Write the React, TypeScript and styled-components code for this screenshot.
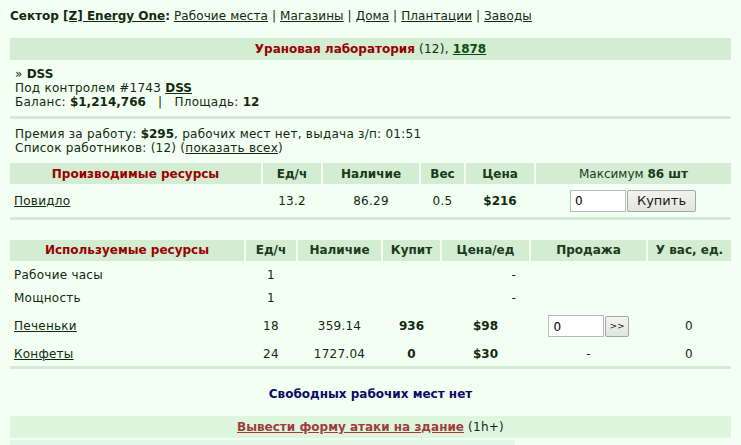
import { FC } from 'react'
import styled, { createGlobalStyle } from 'styled-components'

// ========================================================================
// Style
// ========================================================================

const PAGE = '#f2fff2'
const BAND = '#d2edd2'
const LINE = '#d3ebd3'
const TEXT = '#112a11'
const HEAD = '#1a3a1a'
const RED = '#990000'

const GlobalStyle = createGlobalStyle`
  body {
    margin: 0;
    padding: 9px 10px;
    background: ${PAGE};
    color: ${TEXT};
    font-family: "DejaVu Sans", Verdana, sans-serif;
    font-size: 12px;
    line-height: 14px;
    letter-spacing: 0.25px;
  }
  b, th {
    letter-spacing: 0;
  }
`

const Nav = styled.div`
  height: 14px;
  margin-bottom: 15px;
  letter-spacing: 0.1px;
`

const Link = styled.a<{ $bold?: boolean; $color?: string }>`
  color: ${(p) => p.$color || TEXT};
  text-decoration: underline;
  font-weight: ${(p) => (p.$bold ? 'bold' : 'normal')};
  letter-spacing: ${(p) => (p.$bold ? '0' : 'inherit')};
  cursor: pointer;
`

const Band = styled.div<{ $tone?: string }>`
  height: 22px;
  display: flex;
  align-items: center;
  justify-content: center;
  background: ${(p) => p.$tone || BAND};
`

const Red = styled.b`
  color: ${RED};
`

const Info = styled.div`
  padding: 7px 5px 7px;
  border-bottom: 3px solid ${LINE};
`

const Info2 = styled.div`
  padding: 8px 5px 8px;
`

const Table = styled.table<{ $gap?: number }>`
  width: 100%;
  table-layout: fixed;
  border-collapse: collapse;
  border-bottom: 3px solid ${LINE};
  margin-top: ${(p) => p.$gap || 0}px;
`

const Th = styled.th<{ $red?: boolean; $plain?: boolean }>`
  height: 21px;
  padding: 0;
  background: ${BAND};
  border-left: 2px solid ${PAGE};
  color: ${(p) => (p.$red ? RED : HEAD)};
  font-weight: ${(p) => (p.$plain ? 'normal' : 'bold')};
  text-align: center;

  &:first-child {
    border-left: none;
  }
`

const Row = styled.tr<{ $h: number; $pt: number }>`
  height: ${(p) => p.$h}px;

  & > td {
    padding-top: ${(p) => p.$pt}px;
  }
`

const Td = styled.td<{ $align?: string; $bold?: boolean; $pad?: number }>`
  padding: 0 ${(p) => p.$pad ?? 0}px 0 ${(p) => (p.$align === 'left' ? 4 : 0)}px;
  text-align: ${(p) => p.$align || 'center'};
  font-weight: ${(p) => (p.$bold ? 'bold' : 'normal')};
  letter-spacing: ${(p) => (p.$bold ? '0' : 'inherit')};
  vertical-align: middle;
`

const Form = styled.div`
  display: inline-flex;
  align-items: center;
  gap: 1px;
  vertical-align: middle;
`

const Input = styled.input<{ $w: number }>`
  box-sizing: border-box;
  width: ${(p) => p.$w}px;
  height: 22px;
  padding: 1px 4px 0;
  border: 1px solid #b5bdb5;
  background: #fff;
  color: #000;
  font-family: "DejaVu Sans", Verdana, sans-serif;
  font-size: 12px;
`

const Button = styled.button<{ $small?: boolean }>`
  box-sizing: border-box;
  height: ${(p) => (p.$small ? 21 : 22)}px;
  padding: ${(p) => (p.$small ? '0 3px' : '0 9px')};
  border: 1px solid #a3a8a3;
  border-radius: 2px;
  background: linear-gradient(#f2f3ef, #e2e5de);
  color: #1a1a1a;
  font-family: "DejaVu Sans", Tahoma, sans-serif;
  font-size: ${(p) => (p.$small ? 9 : 13)}px;
  line-height: 1;
`

const Notice = styled.div`
  margin-top: 18px;
  height: 14px;
  text-align: center;
  font-weight: bold;
  letter-spacing: 0;
  color: #0a0a66;
`

const Attack = styled(Band)`
  margin-top: 15px;
`

const Next = styled.div`
  width: 505px;
  height: 6px;
  margin-top: 2px;
  background: #e4f7e4;
`

// ========================================================================
// View
// ========================================================================

const navLinks = ['Рабочие места', 'Магазины', 'Дома', 'Плантации', 'Заводы']

const used = [
  { name: 'Рабочие часы', rate: '1', h: 25, pt: 4 },
  { name: 'Мощность', rate: '1', h: 24, pt: 1 },
]

const App: FC = () => {
  return (
    <>
      <GlobalStyle />
      <Nav>
        <b>
          Сектор <Link $bold>[Z] Energy One</Link>:
        </b>{' '}
        {navLinks.map((l, i) => (
          <span key={l}>
            {i > 0 && ' | '}
            <Link>{l}</Link>
          </span>
        ))}
      </Nav>

      <Band>
        <Red>Урановая лаборатория</Red>&nbsp;(12),&nbsp;
        <Link $bold $color="#0f4a0f">
          1878
        </Link>
      </Band>
      <Info>
        <div>
          » <b>DSS</b>
        </div>
        <div>
          Под контролем #1743 <Link $bold>DSS</Link>
        </div>
        <div>
          Баланс: <b>$1,214,766</b> &nbsp; | &nbsp; Площадь: <b>12</b>
        </div>
      </Info>

      <Info2>
        <div>
          Премия за работу: <b>$295</b>, рабочих мест нет, выдача з/п: 01:51
        </div>
        <div>
          Список работников: (12) (<Link>показать всех</Link>)
        </div>
      </Info2>

      <Table>
        <colgroup>
          <col style={{ width: 252 }} />
          <col style={{ width: 60 }} />
          <col style={{ width: 98 }} />
          <col style={{ width: 45 }} />
          <col style={{ width: 70 }} />
          <col />
        </colgroup>
        <thead>
          <tr>
            <Th $red>Производимые ресурсы</Th>
            <Th>Ед/ч</Th>
            <Th>Наличие</Th>
            <Th>Вес</Th>
            <Th>Цена</Th>
            <Th $plain>
              Максимум <b>86 шт</b>
            </Th>
          </tr>
        </thead>
        <tbody>
          <Row $h={34} $pt={1}>
            <Td $align="left">
              <Link>Повидло</Link>
            </Td>
            <Td>13.2</Td>
            <Td>86.29</Td>
            <Td>0.5</Td>
            <Td $bold>$216</Td>
            <Td>
              <Form>
                <Input $w={56} defaultValue="0" />
                <Button>Купить</Button>
              </Form>
            </Td>
          </Row>
        </tbody>
      </Table>

      <Table $gap={20}>
        <colgroup>
          <col style={{ width: 235 }} />
          <col style={{ width: 52 }} />
          <col style={{ width: 85 }} />
          <col style={{ width: 59 }} />
          <col style={{ width: 89 }} />
          <col style={{ width: 117 }} />
          <col />
        </colgroup>
        <thead>
          <tr>
            <Th $red>Используемые ресурсы</Th>
            <Th>Ед/ч</Th>
            <Th>Наличие</Th>
            <Th>Купит</Th>
            <Th>Цена/ед</Th>
            <Th>Продажа</Th>
            <Th>У вас, ед.</Th>
          </tr>
        </thead>
        <tbody>
          {used.map((r) => (
            <Row $h={r.h} $pt={r.pt} key={r.name}>
              <Td $align="left">{r.name}</Td>
              <Td>{r.rate}</Td>
              <Td />
              <Td />
              <Td $align="right" $pad={14}>
                -
              </Td>
              <Td />
              <Td />
            </Row>
          ))}
          <Row $h={31} $pt={2}>
            <Td $align="left">
              <Link>Печеньки</Link>
            </Td>
            <Td>18</Td>
            <Td>359.14</Td>
            <Td $bold>936</Td>
            <Td $bold>$98</Td>
            <Td>
              <Form>
                <Input $w={56} defaultValue="0" />
                <Button $small>&gt;&gt;</Button>
              </Form>
            </Td>
            <Td>0</Td>
          </Row>
          <Row $h={27} $pt={2}>
            <Td $align="left">
              <Link>Конфеты</Link>
            </Td>
            <Td>24</Td>
            <Td>1727.04</Td>
            <Td $bold>0</Td>
            <Td $bold>$30</Td>
            <Td>-</Td>
            <Td>0</Td>
          </Row>
        </tbody>
      </Table>

      <Notice>Свободных рабочих мест нет</Notice>

      <Attack $tone="#def5de">
        <Link $bold $color="#a03c3c">
          Вывести форму атаки на здание
        </Link>
        &nbsp;(1h+)
      </Attack>
      <Next />
    </>
  )
}

export default App
